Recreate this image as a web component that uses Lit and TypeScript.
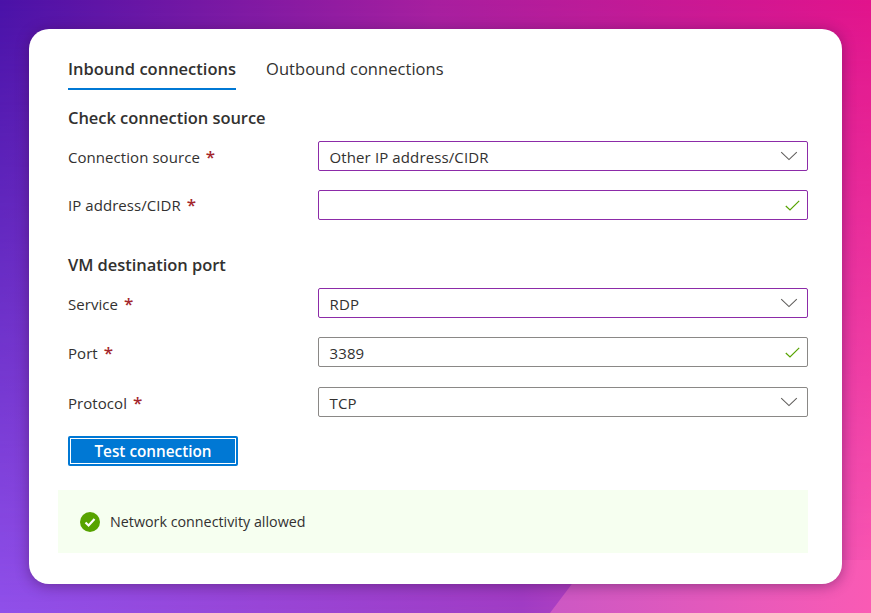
import { LitElement, html, css, svg } from "lit";
import { customElement } from "lit/decorators.js";

const chevron = svg`<svg class="ico chev" width="18" height="10" viewBox="0 0 18 10"><path d="M1.2 1.2 9 8.6 16.8 1.2" fill="none" stroke="#605e5c" stroke-width="1.1"/></svg>`;
const check = svg`<svg class="ico chk" width="15" height="11" viewBox="0 0 15 11"><path d="M.8 6 5 10 14.2 .8" fill="none" stroke="#57a300" stroke-width="1.2"/></svg>`;

@customElement("app-root")
export class AppRoot extends LitElement {
  static styles = css`
    :host { display: block; position: relative; width: 871px; height: 613px; overflow: hidden; box-sizing: border-box; padding: 29px;
      font-family: "Open Sans", "Noto Sans", sans-serif; color: #323130;
      background: linear-gradient(90deg, #4a12a8 0%, #a81f9f 50%, #e2148c 100%); }
    .bg-low { position: absolute; inset: 0; background: linear-gradient(90deg, #9050ea 0%, #a03cc4 60%, #fa5ab4 100%);
      -webkit-mask-image: linear-gradient(180deg, transparent 0%, #000 100%); mask-image: linear-gradient(180deg, transparent 0%, #000 100%); }
    .bg-shape { position: absolute; left: 550px; top: 560px; width: 321px; height: 53px; background: linear-gradient(90deg, #cc58c4, #fa5ab4);
      clip-path: polygon(0 100%, 40px 0, 100% 0, 100% 100%); }
    .card { position: relative; box-sizing: border-box; width: 813px; height: 555px; background: #fff; border-radius: 20px;
      box-shadow: 0 2px 14px rgba(60, 10, 70, .45); padding: 0 34px 0 39px; }
    .tabs { display: flex; gap: 30px; padding-top: 29px; height: 61px; box-sizing: border-box; }
    .tab { font-size: 16.5px; line-height: 22px; height: 32px; box-sizing: border-box; white-space: nowrap; }
    .tab.on { font-weight: 600; width: 168px; border-bottom: 2.5px solid #0078d4; }
    .tab.off { letter-spacing: .05px; }
    h2 { margin: 17px 0 0; font-size: 16.5px; line-height: 22px; font-weight: 600; letter-spacing: -.05px; }
    .row { display: grid; grid-template-columns: 250px 490px; align-items: center; height: 30px; font-size: 15px; margin-top: 19px; }
    .first { margin-top: 12px; }
    .last { margin-top: 20px; }
    .sec2 { margin-top: 34px; }
    .star { color: #a4262c; margin-left: 2px; font-weight: 600; font-size: 17px; line-height: 0; }
    .label, .value { position: relative; top: 1px; }
    .label.up { top: 0; }
    .label { letter-spacing: .06px; }
    .value { letter-spacing: .12px; }
    .ctl { box-sizing: border-box; height: 30px; display: flex; align-items: center; justify-content: space-between; padding: 0 11px 0 10.5px; border: 1px solid #8a8886; border-radius: 2px; }
    .ctl.hl { border-color: #8c2ba8; }
    .ico { display: block; }
    .chev { margin-right: -2px; }
    .chk { margin-right: -4px; }
    button { display: block; margin-top: 19px; box-sizing: border-box; width: 170px; height: 30px; padding: 0; background: #0078d4; color: #fff;
      border: none; border-radius: 2px; outline: 1px solid #fff; outline-offset: -3px; font: 600 15.3px/30px "Open Sans", sans-serif; }
    .banner { display: flex; align-items: center; gap: 10px; margin: 24px 0 0 -10px; width: 750px; height: 63px; box-sizing: border-box; padding: 0 0 0 22px; background: #f6fff0; font-size: 14.3px; }
  `;

  render() {
    return html`
      <div class="bg-low"></div>
      <div class="bg-shape"></div>
      <div class="card">
        <div class="tabs">
          <div class="tab on">Inbound connections</div>
          <div class="tab off">Outbound connections</div>
        </div>
        <h2>Check connection source</h2>
        <div class="row first"><span class="label">Connection source <span class="star">*</span></span><div class="ctl hl"><span class="value">Other IP address/CIDR</span>${chevron}</div></div>
        <div class="row"><span class="label up">IP address/CIDR <span class="star">*</span></span><div class="ctl hl"><span></span>${check}</div></div>
        <h2 class="sec2">VM destination port</h2>
        <div class="row first"><span class="label">Service <span class="star">*</span></span><div class="ctl hl"><span class="value">RDP</span>${chevron}</div></div>
        <div class="row"><span class="label">Port <span class="star">*</span></span><div class="ctl"><span class="value">3389</span>${check}</div></div>
        <div class="row last"><span class="label">Protocol <span class="star">*</span></span><div class="ctl"><span class="value">TCP</span>${chevron}</div></div>
        <button>Test connection</button>
        <div class="banner">
          <svg width="20" height="20" viewBox="0 0 20 20"><circle cx="10" cy="10" r="10" fill="#57a300"/><path d="M5.5 10.5 8.6 13.5 14.5 7" fill="none" stroke="#fff" stroke-width="2.2"/></svg>
          <span>Network connectivity allowed</span>
        </div>
      </div>
    `;
  }
}
